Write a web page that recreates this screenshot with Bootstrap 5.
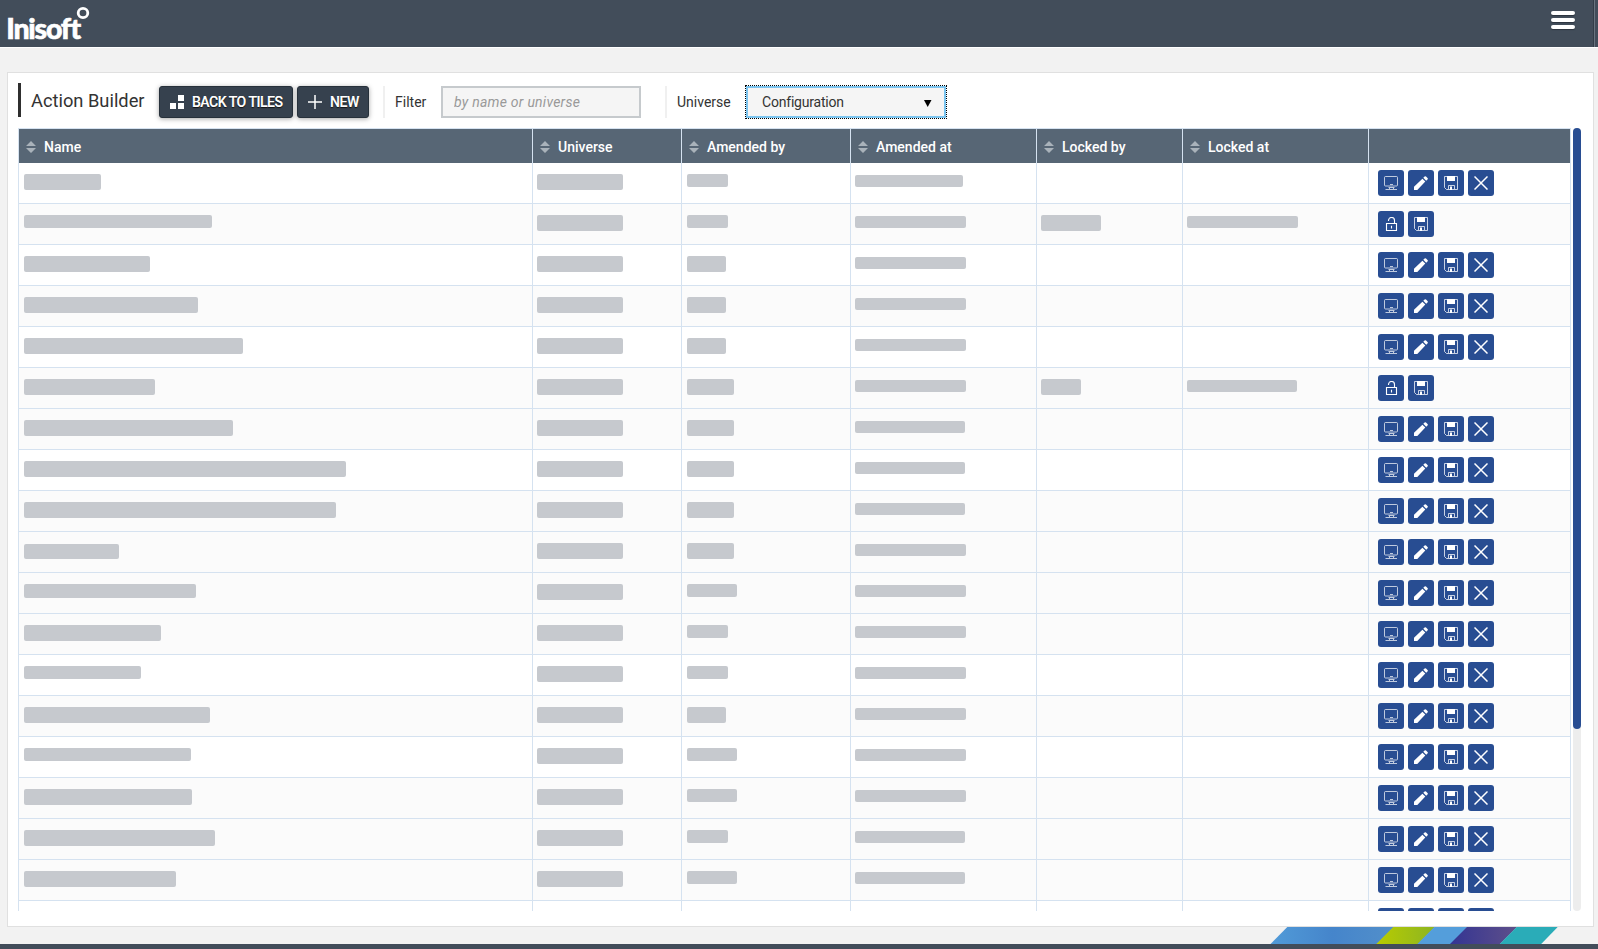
<!DOCTYPE html>
<html lang="en">
<head>
<meta charset="utf-8">
<meta name="viewport" content="width=device-width, initial-scale=1">
<title>Action Builder</title>
<link href="https://cdn.jsdelivr.net/npm/bootstrap@5.3.0/dist/css/bootstrap.min.css" rel="stylesheet">
<style>
  body { height: 949px; background: #f2f2f2; color: #333; font: 14px/20px Roboto, "Liberation Sans", sans-serif; }
  .topbar { height: 47px; background: #424d5a; box-shadow: 0 1px 0 #fff; flex: none; }
  .topbar .edge { width: 5px; border-left: 1px solid #333d48; box-shadow: inset 1px 0 0 #6a7480; }
  .menu-btn { width: 24px; margin-right: 18px; padding-top: 11px; gap: 3px; }
  .menu-btn i { height: 4px; border-radius: 2px; background: #fff; box-shadow: 0 1px 1px #2c343d; }
  .panel { margin: 25px 4px 0 7px; height: 855px; background: #fff; border: 1px solid #e0e0e0; padding: 0 11px 0 10px; flex: none; }
  .tools { height: 55px; padding-top: 10px; }
  .tools h1 { font-size: 18.3px; line-height: 36px; height: 34px; width: 141px; border-left: 3px solid #2f2f2f; padding-left: 10px; font-weight: 400; }
  .tools .btn { height: 32px; margin-top: 3px; padding: 0 0 0 10px; border: 1px solid #27313b; border-radius: 3px; background: #36414e; color: #fff; font-size: 14px; font-weight: 500; letter-spacing: -.48px; box-shadow: 0 1px 5px rgba(0,0,0,.35); text-shadow: 0 1px 1px #111, 0 0 .5px #fff; gap: 8px; }
  .tools svg { flex: none; }
  .split { width: 2px; height: 32px; margin-top: 3px; background: #f0f0f0; }
  .tools label { margin-top: 9px; line-height: 20px; }
  .tools .form-control, .picker { width: 200px; height: 32px; margin-top: 3px; border: 2px solid #c6cacd; border-radius: 0; background: #f5f5f5; padding: 0 11px; font-size: 14px; line-height: 28px; }
  .tools .form-control::placeholder { font-style: italic; color: #999; opacity: 1; letter-spacing: .25px; }
  .tools .picker { border-color: #7cc5f0; outline: 1px dotted #000; padding: 0 12px 0 14px; }
  #choice { letter-spacing: -.2px; }
  .viewport { width: 1553px; height: 783px; }
  .grid { width: 1553px; table-layout: fixed; border-collapse: separate; border-spacing: 0; border-left: 1px solid #d5e2f0; border-top: 1px solid #d5e2f0; margin: 0; }
  .grid th { height: 34px; padding: 2px 0 0 7px; background: #576675; color: #fff; font-weight: 500; font-size: 14px; border: 0; border-right: 1px solid #d5e2f0; vertical-align: middle; }
  .grid td { height: 41px; padding: 0; border: 0; border-right: 1px solid #d5e2f0; border-bottom: 1px solid #d5e2f0; background: #fff; vertical-align: top; }
  .grid tr.tint td { background: #fbfbfb; }
  .sorter { width: 10px; height: 12px; margin: -2px 8px 0 0; fill: #a9b2ba; }
  .bone { display: block; height: 16px; margin: 11px 0 0 4px; border-radius: 2px; background: #c6c9ce; }
  .grid td:nth-child(1) .bone, .grid td:nth-child(3) .bone { margin-left: 5px; }
  .bone.h15 { height: 15px; margin-top: 12px; }
  .bone.h14 { height: 14px; }
  .bone.h13 { height: 13px; }
  .bone.h12 { height: 12px; margin-top: 12px; }
  .tool { width: 26px; height: 26px; border: 0; border-radius: 3px; background: #284d92; padding: 6px; }
  .tool svg { width: 14px; height: 14px; display: block; }
  .track { width: 8px; height: 783px; margin-left: 2px; border-radius: 4px; background: #ededed; }
  .track div { height: 601px; border-radius: 4px; background: #284d92; }
  .foot { height: 22px; border-bottom: 5px solid #424d5a; flex: none; }
  .ribbon { width: 288px; height: 17px; margin-right: 40px; }
</style>
</head>
<body class="d-flex flex-column overflow-hidden">

<svg class="d-none">
  <symbol id="sort" viewBox="0 0 10 12"><path d="M0 5 5 0l5 5zM0 7h10l-5 5z"/></symbol>
  <symbol id="screen" viewBox="0 0 14 14"><g fill="none" stroke="#fff" stroke-opacity=".7"><rect x=".5" y=".5" width="13" height="9.500" rx="1"/><path d="M6 8.500h3M4.500 11.500h6M1.500 13.500h11.500M5 12.500h1M9 12.500h1"/></g></symbol>
  <symbol id="pencil" viewBox="0 0 14 14"><path fill="#fff" d="M0 14v-3.300L8.400 2.700l2.900 2.900L3.300 14zM9.300 1.800 10.600.6q.7-.7 1.400 0l1.500 1.500q.7.700 0 1.400l-1.300 1.200z"/></symbol>
  <symbol id="disk" viewBox="0 0 14 14"><path fill="none" stroke="#fff" stroke-opacity=".75" d="M.5.5h13v13H2.500l-2-2zM4.500 13V9.500h6V13"/><path fill="#fff" d="M3 0h8v5H3zM6 10.500h2V14H6z"/></symbol>
  <symbol id="cross" viewBox="0 0 14 14"><path stroke="#fff" stroke-width="1.500" d="m.5.5 13 13m0-13-13 13"/></symbol>
  <symbol id="unlock" viewBox="0 0 14 14"><g fill="none" stroke="#fff" stroke-width="1.100"><path d="M2.500 6.500h10v7h-10zM4.500 4V3.500a3 3 0 0 1 6 0v3M7.500 8.800v2.700"/></g></symbol>
</svg>

<header class="topbar d-flex justify-content-between">
  <svg width="100" height="47" aria-label="Inisoft">
    <text x="6.200" y="38.500" font-family="Lato, sans-serif" font-weight="900" font-size="28.500" fill="#fff" stroke="#fff" stroke-width=".6" textLength="75" lengthAdjust="spacing">Inisoft</text>
    <ellipse cx="83" cy="13" rx="4.800" ry="4.700" fill="none" stroke="#fff" stroke-width="2.800"/>
  </svg>
  <div class="d-flex">
    <div class="menu-btn d-flex flex-column"><i></i><i></i><i></i></div>
    <div class="edge"></div>
  </div>
</header>

<main class="panel">
  <div class="tools d-flex align-items-start">
    <h1 class="m-0 text-nowrap">Action Builder</h1>
    <button class="btn d-flex align-items-center text-nowrap" style="width:134px">
      <svg width="14" height="14" fill="#fff"><path d="M8 0h6v6H8zM0 8h6v6H0zM8 8h6v6H8z"/></svg>BACK TO TILES</button>
    <button class="btn d-flex align-items-center ms-1" style="width:72px">
      <svg width="14" height="14"><path d="M0 7h14M7 0v14" stroke="#fff" stroke-width="1.500"/></svg>NEW</button>
    <div class="split" style="margin-left:14px"></div>
    <label for="filter" style="width:46px;margin-left:10px">Filter</label>
    <input id="filter" class="form-control" placeholder="by name or universe">
    <div class="split" style="margin-left:24px"></div>
    <label style="width:69px;margin-left:10px">Universe</label>
    <div class="picker d-flex align-items-center justify-content-between">
      <span id="choice">Configuration</span>
      <svg width="9" height="8" class="mt-1"><path d="M1 0h7.500L4.700 7z"/></svg>
    </div>
  </div>
  <div class="d-flex">
    <div class="viewport overflow-hidden">
      <table class="grid">
        <colgroup><col style="width:514px"><col style="width:149px"><col style="width:169px"><col style="width:186px"><col style="width:146px"><col style="width:186px"><col style="width:202px"></colgroup>
        <thead><tr>
          <th><svg class="sorter"><use href="#sort"/></svg>Name</th>
          <th><svg class="sorter"><use href="#sort"/></svg>Universe</th>
          <th><svg class="sorter"><use href="#sort"/></svg>Amended by</th>
          <th><svg class="sorter"><use href="#sort"/></svg>Amended at</th>
          <th><svg class="sorter"><use href="#sort"/></svg>Locked by</th>
          <th><svg class="sorter"><use href="#sort"/></svg>Locked at</th>
          <th></th>
        </tr></thead>
        <tbody id="rows"></tbody>
      </table>
    </div>
    <div class="track"><div></div></div>
  </div>
</main>

<footer class="foot d-flex justify-content-end">
  <svg class="ribbon" viewBox="0 0 288 17">
    <defs>
      <linearGradient id="b1"><stop offset="0" stop-color="#519bd8"/><stop offset=".5" stop-color="#4585cb"/><stop offset="1" stop-color="#528fca"/></linearGradient>
      <linearGradient id="g1"><stop offset="0" stop-color="#b8cc00"/><stop offset="1" stop-color="#8db522"/></linearGradient>
      <linearGradient id="p1"><stop offset="0" stop-color="#343593"/><stop offset="1" stop-color="#5e4f8a"/></linearGradient>
    </defs>
    <path fill="url(#b1)" d="M.5 17 17.300 0H124l-17 17z"/>
    <path fill="url(#g1)" d="M106.300 17l17-17H165l-17 17z"/>
    <path fill="#549edb" d="M147.300 17l17-17H198l-17 17z"/>
    <path fill="url(#p1)" d="M180 17l17-17H247l-17 17z"/>
    <path fill="#2aacb8" d="M229.700 17l17-17h41l-16.500 17z"/>
  </svg>
</footer>

<script>
  // [tinted, name w, name h, amended-by w, amended-by h, amended-at w, locked-by w, locked-at w]
  const data = [
    [0, 77,16,41,13,108], [1,188,13,41,13,111,60,111], [0,126,16,39,16,111], [1,174,16,39,16,111],
    [0,219,16,39,16,111], [1,131,16,47,16,111,40,110], [1,209,16,47,16,110], [0,322,16,47,16,110],
    [1,312,16,47,16,110], [1, 95,15,47,16,111], [1,172,14,50,13,111], [1,137,16,41,13,111],
    [0,117,13,41,13,111], [1,186,16,39,16,111], [0,167,13,50,13,111], [1,168,16,50,13,111],
    [1,191,16,41,13,110], [1,152,16,50,13,110], [0]
  ];
  const bone = (w, h) => w ? `<span class="bone h${h}" style="width:${w}px"></span>` : '';
  const tools = ids => ids.map(i => `<button class="tool"><svg><use href="#${i}"/></svg></button>`).join('');
  document.getElementById('rows').innerHTML = data.map(([t, n, nh, b, bh, a, lb, la]) => `
    <tr class="${t ? 'tint' : ''}">
      <td>${bone(n, nh)}</td><td>${bone(n && 86, 16)}</td><td>${bone(b, bh)}</td><td>${bone(a, 12)}</td>
      <td>${bone(lb, 16)}</td><td>${bone(la, 12)}</td>
      <td><div class="d-flex gap-1" style="padding:7px 0 0 9px">${tools(lb ? ['unlock', 'disk'] : ['screen', 'pencil', 'disk', 'cross'])}</div></td>
    </tr>`).join('');
</script>
<script src="https://cdn.jsdelivr.net/npm/bootstrap@5.3.0/dist/js/bootstrap.bundle.min.js"></script>
</body>
</html>
